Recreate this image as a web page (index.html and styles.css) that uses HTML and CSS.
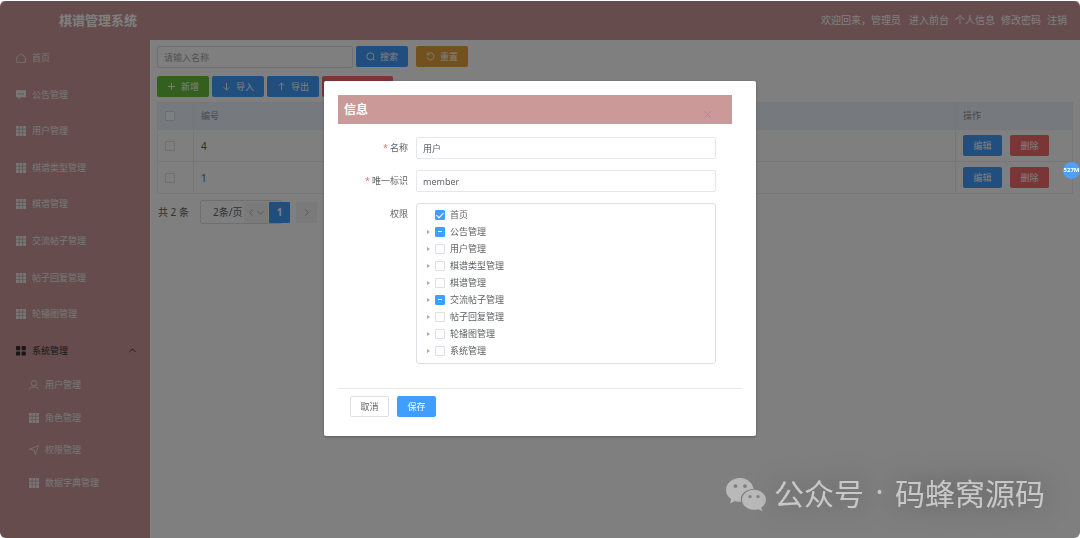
FILE: index.html
```html
<!DOCTYPE html>
<html lang="zh-CN">
<head>
<meta charset="utf-8">
<title>棋谱管理系统</title>
<link rel="stylesheet" href="styles.css">
</head>
<body>
<svg class="defs" aria-hidden="true">
  <symbol id="grid9" viewBox="0 0 10 10"><path d="M0 0h2.8v2.8H0zM3.5 0h2.9v2.8H3.5zM7.1 0H10v2.8H7.1zM0 3.5h2.8v2.9H0zM3.5 3.5h2.9v2.9H3.5zM7.1 3.5H10v2.9H7.1zM0 7.1h2.8V10H0zM3.5 7.1h2.9V10H3.5zM7.1 7.1H10V10H7.1z" fill="currentColor"/></symbol>
  <symbol id="grid4" viewBox="0 0 10 10"><g fill="currentColor"><rect x="0" y="0" width="4.2" height="4.2" rx=".7"/><rect x="5.6" y="0" width="4.2" height="4.2" rx=".7"/><rect x="0" y="5.4" width="4.2" height="4.2" rx=".7"/><rect x="5.6" y="5.4" width="4.2" height="4.2" rx=".7"/></g></symbol>
  <symbol id="home" viewBox="0 0 10 10"><path d="M.7 9.4V4.3L5 .7l4.3 3.6v5.1z" fill="none" stroke="currentColor" stroke-width=".8" stroke-linejoin="round"/></symbol>
  <symbol id="chat" viewBox="0 0 10 10"><path fill-rule="evenodd" d="M0 .3h10v7H4.800L2.300 9.600V7.300H0zM2.200 3.300v1.200h1.200V3.300zM4.400 3.300v1.200h1.200V3.300zM6.600 3.300v1.200h1.200V3.300z" fill="currentColor"/></symbol>
  <symbol id="user" viewBox="0 0 10 10"><g fill="none" stroke="currentColor" stroke-width=".8"><circle cx="5" cy="3.300" r="2.700"/><path d="M.7 9.600V9Q.7 7.200 2.700 7.200h4.600Q9.300 7.200 9.300 9v.6"/></g></symbol>
  <symbol id="send" viewBox="0 0 10 10"><path d="M.4 4.300 9.600.5 6.300 9.500 5.300 5z" fill="none" stroke="currentColor" stroke-width=".8" stroke-linejoin="round"/></symbol>
  <symbol id="up" viewBox="0 0 10 10"><path d="m1.500 6.700 3.500-3.500 3.500 3.500" fill="none" stroke="currentColor"/></symbol>
  <symbol id="down" viewBox="0 0 10 10"><path d="m1.500 3.300 3.500 3.500 3.500-3.500" fill="none" stroke="currentColor"/></symbol>
  <symbol id="left" viewBox="0 0 10 10"><path d="M6.500 1.500 3 5l3.500 3.500" fill="none" stroke="currentColor"/></symbol>
  <symbol id="right" viewBox="0 0 10 10"><path d="M3.500 1.500 7 5 3.500 8.500" fill="none" stroke="currentColor"/></symbol>
  <symbol id="plus" viewBox="0 0 10 10"><path d="M5 1v8M1 5h8" fill="none" stroke="currentColor"/></symbol>
  <symbol id="arrow-down" viewBox="0 0 10 10"><path d="M5 1v8M2 6l3 3 3-3" fill="none" stroke="currentColor"/></symbol>
  <symbol id="arrow-up" viewBox="0 0 10 10"><path d="M5 9V1M2 4l3-3 3 3" fill="none" stroke="currentColor"/></symbol>
  <symbol id="search" viewBox="0 0 10 10"><path d="M8 7.500 9.200 9" fill="none" stroke="currentColor"/><circle cx="4.900" cy="4.800" r="3.900" fill="none" stroke="currentColor"/></symbol>
  <symbol id="reset" viewBox="0 0 10 10"><path d="M1.700 2.700A3.900 3.900 0 1 1 1.200 6M1.500.8v2.400h2.400" fill="none" stroke="currentColor"/></symbol>
  <symbol id="trash" viewBox="0 0 10 10"><path d="M1 2.500h8M3.500 2.500V1h3v1.500M2 2.500V9h6V2.500" fill="none" stroke="currentColor"/></symbol>
  <symbol id="close" viewBox="0 0 10 10"><path d="m1.500 1.500 7 7m0-7-7 7" fill="none" stroke="currentColor"/></symbol>
</svg>

<div class="app">
  <header class="topbar">
    <h1 class="brand">棋谱管理系统</h1>
    <nav class="topnav">
      <span class="welcome">欢迎回来，管理员</span>
      <a href="#">进入前台</a><a href="#">个人信息</a><a href="#">修改密码</a><a href="#">注销</a>
    </nav>
  </header>
  <div class="body">
    <nav class="sidebar">
      <ul class="menu">
        <li><a href="#"><svg class="icon"><use href="#home"/></svg>首页</a></li>
        <li><a href="#"><svg class="icon"><use href="#chat"/></svg>公告管理</a></li>
        <li><a href="#"><svg class="icon"><use href="#grid9"/></svg>用户管理</a></li>
        <li><a href="#"><svg class="icon"><use href="#grid9"/></svg>棋谱类型管理</a></li>
        <li><a href="#"><svg class="icon"><use href="#grid9"/></svg>棋谱管理</a></li>
        <li><a href="#"><svg class="icon"><use href="#grid9"/></svg>交流帖子管理</a></li>
        <li><a href="#"><svg class="icon"><use href="#grid9"/></svg>帖子回复管理</a></li>
        <li><a href="#"><svg class="icon"><use href="#grid9"/></svg>轮播图管理</a></li>
        <li><a href="#" class="open"><svg class="icon"><use href="#grid4"/></svg>系统管理<svg class="caret"><use href="#up"/></svg></a></li>
      </ul>
      <ul class="menu submenu">
        <li><a href="#"><svg class="icon"><use href="#user"/></svg>用户管理</a></li>
        <li><a href="#"><svg class="icon"><use href="#grid9"/></svg>角色管理</a></li>
        <li><a href="#"><svg class="icon"><use href="#send"/></svg>权限管理</a></li>
        <li><a href="#"><svg class="icon"><use href="#grid9"/></svg>数据字典管理</a></li>
      </ul>
    </nav>
    <main class="main">
      <div class="search-row">
        <input class="field search-field" type="text" placeholder="请输入名称" aria-label="名称">
        <button class="btn primary wide"><svg class="bicon"><use href="#search"/></svg>搜索</button>
        <button class="btn warning wide reset"><svg class="bicon"><use href="#reset"/></svg>重置</button>
      </div>
      <div class="tool-row">
        <button class="btn success wide"><svg class="bicon"><use href="#plus"/></svg>新增</button>
        <button class="btn primary wide"><svg class="bicon"><use href="#arrow-down"/></svg>导入</button>
        <button class="btn primary wide"><svg class="bicon"><use href="#arrow-up"/></svg>导出</button>
        <button class="btn danger batch"><svg class="bicon"><use href="#trash"/></svg>批量删除</button>
      </div>
      <table class="grid">
        <thead>
          <tr><th class="c-check"><input class="check" type="checkbox" aria-label="全选"></th><th>编号</th><th class="c-ops">操作</th></tr>
        </thead>
        <tbody>
          <tr><td><input class="check" type="checkbox" aria-label="选择 4"></td><td>4</td><td><div class="ops"><button class="btn primary">编辑</button><button class="btn danger">删除</button></div></td></tr>
          <tr><td><input class="check" type="checkbox" aria-label="选择 1"></td><td>1</td><td><div class="ops"><button class="btn primary">编辑</button><button class="btn danger">删除</button></div></td></tr>
        </tbody>
      </table>
      <div class="pager">
        <span class="total">共 2 条</span>
        <span class="size"><select aria-label="每页条数"><option>2条/页</option></select></span>
        <button class="page prev" aria-label="上一页"><svg class="bicon"><use href="#left"/></svg><svg class="bicon"><use href="#down"/></svg></button>
        <button class="page current">1</button>
        <button class="page" aria-label="下一页"><svg class="bicon"><use href="#right"/></svg></button>
      </div>
    </main>
  </div>
</div>

<div class="overlay">
  <section class="dialog" role="dialog" aria-labelledby="dlg-title">
    <header class="dialog-head">
      <h2 id="dlg-title">信息</h2>
      <button class="close" aria-label="关闭"><svg class="bicon"><use href="#close"/></svg></button>
    </header>
    <form class="form">
      <label class="required" for="f-name">名称</label>
      <input class="field" id="f-name" type="text" value="用户">
      <label class="required" for="f-key">唯一标识</label>
      <input class="field" id="f-key" type="text" value="member">
      <span class="form-label" id="perm">权限</span>
      <ul class="tree" aria-labelledby="perm">
        <li class="leaf"><label><input class="check" type="checkbox" checked>首页</label></li>
        <li><label><input class="check partial" type="checkbox">公告管理</label></li>
        <li><label><input class="check" type="checkbox">用户管理</label></li>
        <li><label><input class="check" type="checkbox">棋谱类型管理</label></li>
        <li><label><input class="check" type="checkbox">棋谱管理</label></li>
        <li><label><input class="check partial" type="checkbox">交流帖子管理</label></li>
        <li><label><input class="check" type="checkbox">帖子回复管理</label></li>
        <li><label><input class="check" type="checkbox">轮播图管理</label></li>
        <li><label><input class="check" type="checkbox">系统管理</label></li>
      </ul>
    </form>
    <footer class="dialog-foot">
      <button class="btn plain">取消</button>
      <button class="btn primary">保存</button>
    </footer>
  </section>
</div>

<div class="memory">527M</div>

<div class="watermark">
  <svg class="wechat" viewBox="0 0 40 33" aria-hidden="true">
    <path fill-rule="evenodd" fill="currentColor" d="M14 0C6.300 0 0 5.300 0 12c0 3.700 2 7 5.200 9.200L4 25.500l5-2.600c1.700.6 3.900 1 6 .9C13.500 16.500 19.500 10.800 27.700 11 26.500 4.700 20.900 0 14 0zM9.500 6.200a1.900 1.900 0 1 1 0 3.800 1.900 1.900 0 0 1 0-3.800zM19 6.200a1.900 1.900 0 1 1 0 3.800 1.900 1.900 0 0 1 0-3.800z"/>
    <path fill-rule="evenodd" fill="currentColor" d="M28 11.800c-6.600 0-12 4.400-12 10s5.400 10 12 10c1.500 0 2.900-.2 4.200-.6L36.300 33l-1.100-3.400c2.900-1.800 4.800-4.600 4.800-7.800 0-5.600-5.400-10-12-10zM24 17a1.600 1.600 0 1 1 0 3.200A1.600 1.600 0 0 1 24 17zM32 17a1.600 1.600 0 1 1 0 3.200A1.600 1.600 0 0 1 32 17z"/>
  </svg>
  <span>公众号</span><span class="dot">·</span><span>码蜂窝源码</span>
</div>
</body>
</html>
```
FILE: styles.css
```css
* { box-sizing: border-box; }
body {
  margin: 0;
  background: #fff;
  color: #606266;
  font: 9px/12px "Noto Sans", "Noto Sans CJK SC", sans-serif;
}
button, input, select { font: inherit; color: inherit; margin: 0; }
ul { list-style: none; margin: 0; padding: 0; }
a { color: inherit; text-decoration: none; }
.defs { position: absolute; width: 0; height: 0; }

.app {
  display: flex;
  flex-direction: column;
  height: 100vh;
  padding-top: 1px;
  border-radius: 6px;
  background: #fff;
  overflow: hidden;
}
.topbar {
  flex: none;
  display: flex;
  align-items: center;
  justify-content: space-between;
  height: 39px;
  padding: 0 13px 0 59px;
  background: #cc9999;
  border-bottom: 1px solid #b8a4a4;
  color: #fff;
}
.brand { margin: 0; font-size: 13px; line-height: 20px; }
.topnav { display: flex; gap: 6px; font-size: 10px; }
.welcome { margin-right: 2px; }
.body { flex: 1; display: flex; }

.sidebar { flex: none; width: 150px; background: #cc9999; color: #eee; }
.menu { display: grid; grid-auto-rows: 1fr; height: 329px; }
.menu a { display: flex; align-items: center; gap: 6px; height: 100%; padding: 0 13px 0 16px; }
.menu .open { color: #303133; }
.submenu { height: 130px; }
.submenu a { padding-left: 29px; }
.icon { width: 10px; height: 10px; }
.caret { width: 9px; height: 9px; margin-left: auto; }

.main { flex: 1; min-width: 0; padding: 6px 7px; }
.search-row, .tool-row { display: flex; gap: 3px; }
.tool-row { margin: 8px 0 5px; }
.field {
  height: 22px;
  padding: 0 6px;
  border: 1px solid #dcdfe6;
  border-radius: 2px;
  background: #fff;
  outline: none;
}
.field::placeholder { color: #a4a6ab; }
.search-field { width: 196px; }
.btn {
  display: flex;
  align-items: center;
  justify-content: center;
  gap: 5px;
  width: 39px;
  height: 21px;
  padding: 0;
  border: 0;
  border-radius: 2px;
  color: #fff;
}
.wide { width: 52px; }
.batch { width: 71px; }
.reset { margin-left: 5px; }
.primary { background: #409eff; }
.success { background: #67c23a; }
.warning { background: #e6a23c; }
.danger { background: #f56c6c; }
.plain { background: #fff; border: 1px solid #dcdfe6; color: #606266; }
.bicon { width: 9px; height: 9px; }

.grid { width: 100%; border-collapse: collapse; table-layout: fixed; }
.grid th, .grid td { height: 32px; padding: 0 7px; border: 1px solid #ebeef5; text-align: left; font-weight: 400; }
.grid th { height: 27px; background: #ecf5ff; color: #909399; }
.grid .c-check { width: 36px; }
.grid .c-ops { width: 117px; }
.ops { display: flex; gap: 8px; }
.check {
  appearance: none;
  display: block;
  flex: none;
  width: 10px;
  height: 10px;
  margin: 0;
  border: 1px solid #dcdfe6;
  border-radius: 1px;
  background: #fff;
}
.check:checked, .check.partial { display: grid; place-items: center; border-color: #409eff; background: #409eff; }
.check:checked::after { content: ""; width: 3px; height: 6px; border: solid #fff; border-width: 0 1px 1px 0; transform: rotate(45deg); }
.check.partial::after { content: ""; width: 4px; height: 1px; background: #fff; }
.grid td:nth-child(2) { font-size: 10px; }

.pager { display: flex; align-items: center; gap: 6px; padding-top: 6px; font-size: 10px; }
.total { width: 33px; white-space: nowrap; padding-left: 1px; }
.size { margin-left: 4px; }
.size select { display: block; appearance: none; width: 82px; height: 24px; padding: 0 12px; border: 1px solid #dcdfe6; border-radius: 2px; background: #fff; }
.page { display: flex; align-items: center; justify-content: center; width: 21px; height: 21px; padding: 0; border: 0; border-radius: 1px; background: #f4f4f5; color: #a8abb2; }
.prev { width: 24px; margin-left: -44px; }
.current { margin-left: -5px; background: #409eff; color: #fff; font-weight: 700; }

.overlay { position: fixed; inset: 1px 0 0; padding-top: 80px; border-radius: 6px; background: rgba(0, 0, 0, .5); }
.dialog {
  width: 40%;
  margin: 0 auto;
  padding: 14px 14px 19px;
  border-radius: 2px;
  background: #fff;
  box-shadow: 0 1px 3px rgba(0, 0, 0, .3);
}
.dialog-head { display: flex; align-items: center; justify-content: space-between; height: 29px; margin-right: 10px; padding: 0 20px 0 6px; background: #cc9999; }
.dialog-head h2 { margin: 0; color: #fff; font-size: 12px; line-height: 16px; }
.close { padding: 10px 0 0; border: 0; background: none; color: #909399; }
.close .bicon { display: block; }
.form { display: grid; grid-template-columns: 70px 1fr; gap: 11px 8px; margin: 13px 26px 24px 0; }
.form .field { border-color: #e4e7ed; }
.required, .form-label { line-height: 22px; text-align: right; }
.required::before { content: "*"; margin-right: 2px; color: #f56c6c; }
.tree { padding: 2px 10px 4px; border: 1px solid #dcdfe6; border-radius: 3px; }
.tree li { display: flex; align-items: center; gap: 5px; height: 17px; }
.tree li::before { content: ""; border: solid transparent; border-width: 2px 0 2px 3px; border-left-color: #a8abb2; }
.tree .leaf::before { border-left-color: transparent; }
.tree label { display: flex; align-items: center; gap: 5px; }
.dialog-foot { display: flex; gap: 8px; padding: 7px 12px 0; border-top: 1px solid #e8e8e8; }

.memory {
  position: fixed;
  right: 0;
  top: 162px;
  width: 17px;
  height: 17px;
  border-radius: 50%;
  background: #4fa0fb;
  color: #fff;
  font: 700 6px/17px "Noto Sans", sans-serif;
  text-align: center;
}
.watermark {
  position: fixed;
  right: 35px;
  bottom: 22px;
  display: flex;
  align-items: flex-end;
  color: #c8c8c8;
  font: 30px/48px "Noto Sans CJK SC", sans-serif;
  text-shadow: 0 0 30px rgba(0, 0, 0, .4);
}
.wechat { width: 40px; height: 33px; margin: 0 8px 5px 0; color: #b9b9b9; }
.dot { width: 31px; font-family: "Noto Sans", sans-serif; text-align: center; }
```
